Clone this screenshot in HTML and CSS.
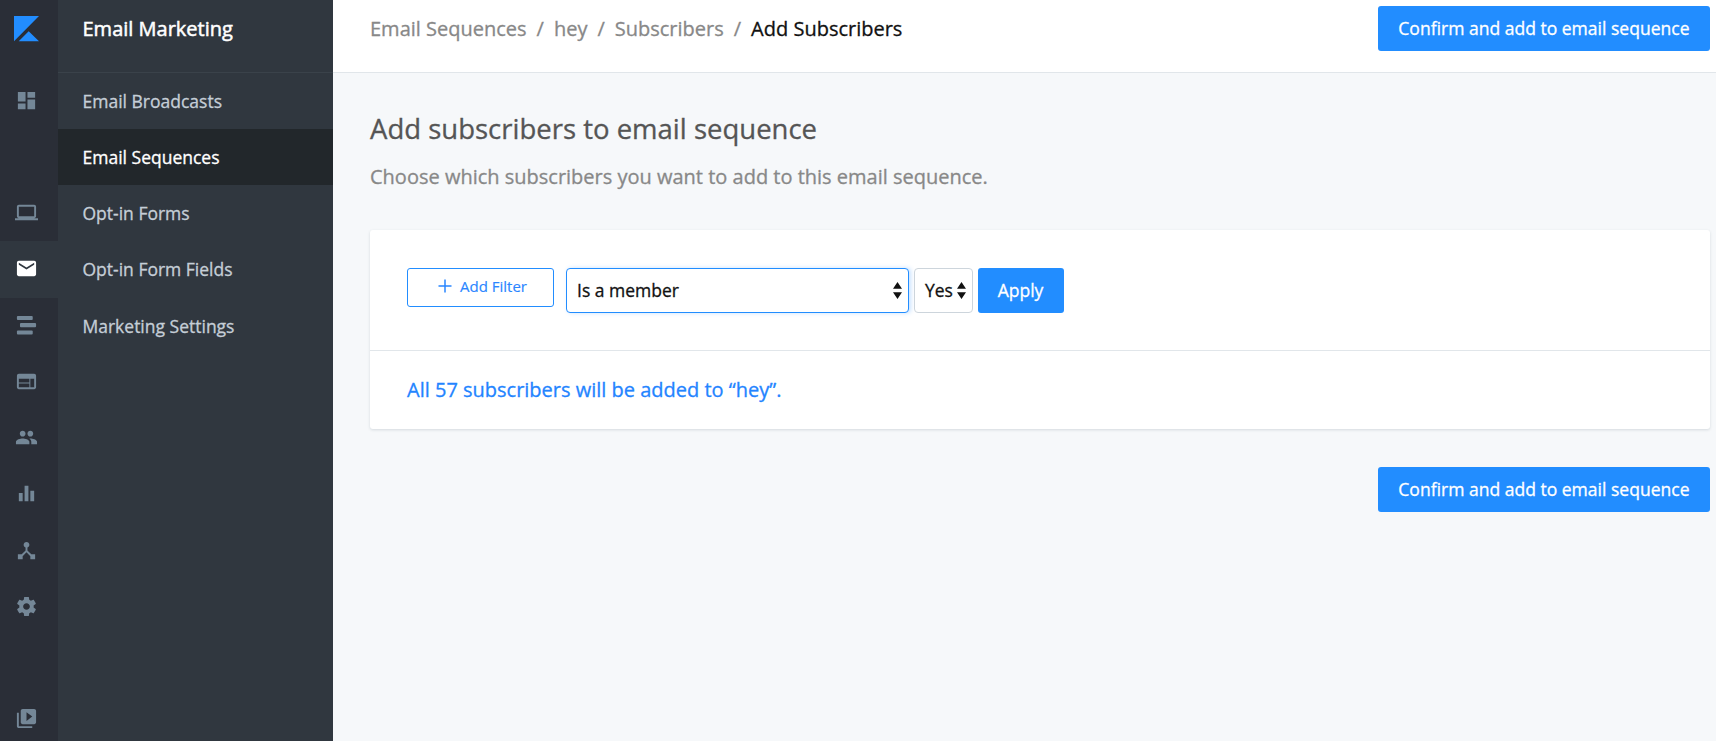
FILE: index.html
```
<!DOCTYPE html>
<html lang="en">
<head>
<meta charset="utf-8">
<title>Add Subscribers</title>
<link rel="stylesheet" href="styles.css">
</head>
<body>
<div class="app">
  <nav class="rail">
    <a class="logo"><svg width="26" height="26" viewBox="0 0 26 26"><path d="M0 0H25L0 25.300zM14.700 15.200L25 25.200H4.700z"/></svg></a>
    <a class="rail-item"><svg viewBox="0 0 24 24"><path d="M3 13h8V3H3v10zm0 8h8v-6H3v6zm10 0h8V11h-8v10zm0-18v6h8V3h-8z"/></svg></a>
    <a class="rail-item spaced"><svg viewBox="0 0 24 24"><path d="M20 18c1.100 0 1.990-.9 1.990-2L22 6c0-1.100-.9-2-2-2H4c-1.100 0-2 .9-2 2v10c0 1.100.9 2 2 2H0v2h24v-2h-4zM4 6h16v10H4V6z"/></svg></a>
    <a class="rail-item active"><svg viewBox="0 0 24 24"><path d="M20 4H4c-1.100 0-1.990.9-1.990 2L2 18c0 1.100.9 2 2 2h16c1.100 0 2-.9 2-2V6c0-1.100-.9-2-2-2zm0 4l-8 5-8-5V6l8 5 8-5v2z"/></svg></a>
    <a class="rail-item"><svg viewBox="0 0 24 24"><rect x="2" y="2" width="16.500" height="4.200" rx="1"/><rect x="5.200" y="9.500" width="16.800" height="4.200" rx="1"/><rect x="2" y="17.200" width="16.500" height="4.200" rx="1"/></svg></a>
    <a class="rail-item"><svg viewBox="0 0 24 24"><path d="M20 4H4c-1.100 0-1.990.9-1.990 2L2 18c0 1.100.9 2 2 2h16c1.100 0 2-.9 2-2V6c0-1.100-.9-2-2-2zm-5 14H4v-4h11v4zm0-5H4V9h11v4zm5 5h-4V9h4v9z"/></svg></a>
    <a class="rail-item"><svg viewBox="0 0 24 24"><path d="M16 11c1.660 0 2.990-1.340 2.990-3S17.660 5 16 5s-3 1.340-3 3 1.340 3 3 3zm-8 0c1.660 0 2.990-1.340 2.990-3S9.660 5 8 5 5 6.340 5 8s1.340 3 3 3zm0 2c-2.330 0-7 1.170-7 3.500V19h14v-2.500C15 14.170 10.330 13 8 13zm8 0c-.29 0-.62.020-.97.050C16.190 13.890 17 15.020 17 16.500V19h6v-2.500c0-2.330-4.670-3.500-7-3.500z"/></svg></a>
    <a class="rail-item"><svg viewBox="0 0 24 24"><path d="M4 11.500h4V20H4zM10 4h4v16h-4zM16 9h4v11h-4z"/></svg></a>
    <a class="rail-item low"><svg viewBox="0 0 24 24"><path d="M17 16l-4-4V8.820C14.160 8.400 15 7.300 15 6c0-1.660-1.340-3-3-3S9 4.340 9 6c0 1.300.84 2.400 2 2.820V12l-4 4H3v5h5v-3.050l4-4.200 4 4.200V21h5v-5h-4z"/></svg></a>
    <a class="rail-item"><svg viewBox="0 0 24 24"><path d="M19.430 12.980c.04-.32.070-.64.070-.98s-.03-.66-.07-.98l2.110-1.650c.19-.15.240-.42.120-.64l-2-3.460c-.12-.22-.39-.3-.61-.22l-2.490 1c-.52-.4-1.080-.73-1.690-.98l-.38-2.650C14.460 2.180 14.250 2 14 2h-4c-.25 0-.46.180-.49.420l-.38 2.650c-.61.250-1.170.590-1.690.980l-2.490-1c-.23-.09-.49 0-.61.220l-2 3.460c-.13.220-.07.490.120.640l2.110 1.650c-.04.320-.07.650-.07.980s.03.660.070.980l-2.110 1.650c-.19.150-.24.420-.12.640l2 3.460c.12.220.390.300.610.220l2.490-1c.52.400 1.080.730 1.690.980l.38 2.650c.03.240.240.420.490.420h4c.25 0 .46-.18.490-.42l.38-2.650c.61-.25 1.170-.59 1.690-.98l2.490 1c.23.090.490 0 .61-.22l2-3.460c.12-.22.070-.49-.12-.64l-2.110-1.650zM12 15.500c-1.930 0-3.500-1.570-3.500-3.500s1.570-3.500 3.500-3.500 3.500 1.570 3.500 3.500-1.570 3.500-3.500 3.500z"/></svg></a>
    <a class="rail-item spaced"><svg viewBox="0 0 24 24"><path d="M4 6H2v14c0 1.100.9 2 2 2h14v-2H4V6zm16-4H8c-1.100 0-2 .9-2 2v12c0 1.100.9 2 2 2h12c1.100 0 2-.9 2-2V4c0-1.100-.9-2-2-2zm-8 12.500v-9l6 4.500-6 4.500z"/></svg></a>
  </nav>
  <aside class="sidebar">
    <h2 class="sidebar-title"><span>Email Marketing</span></h2>
    <a class="side-link">Email Broadcasts</a>
    <a class="side-link current">Email Sequences</a>
    <a class="side-link">Opt-in Forms</a>
    <a class="side-link">Opt-in Form Fields</a>
    <a class="side-link last">Marketing Settings</a>
  </aside>
  <main class="main">
    <header class="topbar">
      <div class="crumbs"><a>Email Sequences</a><i>/</i><a>hey</a><i>/</i><a>Subscribers</a><i>/</i><b>Add Subscribers</b></div>
      <button class="btn">Confirm and add to email sequence</button>
    </header>
    <section class="content">
      <h1 class="title">Add subscribers to email sequence</h1>
      <p class="lead">Choose which subscribers you want to add to this email sequence.</p>
      <div class="card">
        <div class="filters">
          <button class="add-filter"><svg width="14" height="14" viewBox="0 0 14 14"><path d="M7 .5v13M.5 7h13"/></svg><span>Add Filter</span></button>
          <div class="select focused"><span>Is a member</span><svg width="9" height="17" viewBox="0 0 9 17"><path d="M4.500 0L9 6.800H0zM4.500 17L0 10.200h9z"/></svg></div>
          <div class="select small"><span>Yes</span><svg width="9" height="17" viewBox="0 0 9 17"><path d="M4.500 0L9 6.800H0zM4.500 17L0 10.200h9z"/></svg></div>
          <button class="btn apply">Apply</button>
        </div>
        <div class="result">All 57 subscribers will be added to “hey”.</div>
      </div>
      <div class="actions"><button class="btn">Confirm and add to email sequence</button></div>
    </section>
  </main>
</div>
</body>
</html>
```

FILE: styles.css
```
* { box-sizing: border-box; }
body { margin: 0; font-family: "Open Sans", "Noto Sans", sans-serif; font-size: 17.500px; color: #111; -webkit-text-stroke: .3px currentColor; }
h1, h2, p { margin: 0; font-weight: 400; }
button { font-family: inherit; margin: 0; -webkit-text-stroke: inherit; }
svg { display: block; flex: none; }

.app { display: flex; height: 741px; overflow: hidden; background: #f6f8fa; }

.rail { width: 57.500px; flex: none; background: #2a2e37; }
.logo { display: block; height: 73px; padding: 16px 0 0 14px; }
.logo svg { fill: #228dff; }
.rail-item { display: flex; align-items: center; height: 56.200px; padding: 0 0 1px 14.700px; }
.rail-item svg { width: 23px; height: 23px; fill: #748797; }
.rail-item.low { padding-bottom: 0; }
.rail-item.spaced { margin-top: 56px; }
.rail-item.active { background: #30373f; }
.rail-item.active svg { fill: #fff; }

.sidebar { width: 275.500px; flex: none; background: #30373f; }
.sidebar-title { height: 73px; padding: 13px 0 0 25px; border-bottom: 1px solid #3a424a; color: #fff; font-size: 20px; line-height: 31px; -webkit-text-stroke: .5px currentColor; }
.side-link { display: flex; align-items: center; height: 56px; padding: 0 0 1px 25px; color: #c5ced7; font-size: 17.500px; }
.side-link.current { background: #22272b; color: #fff; }
.side-link.last { height: 57px; padding-bottom: 0; }

.main { flex: 1; min-width: 0; }
.topbar { display: flex; justify-content: space-between; align-items: flex-start; height: 73px; padding: 6px 6.500px 0 37px; background: #fff; border-bottom: 1px solid #e1e6ea; }
.crumbs { display: flex; gap: 10px; margin-top: 7px; font-size: 20px; line-height: 31px; color: #888; }
.crumbs i { font-style: normal; }
.crumbs b { font-weight: 400; color: #111; }

.btn { height: 45px; width: 331.200px; padding: 0 0 1px; border: 0; border-radius: 3px; background: #228dff; color: #fff; font-size: 17.550px; white-space: nowrap; }

.content { padding: 36px 6.500px 0 37px; }
.title { font-size: 27.500px; line-height: 40px; color: #555; }
.lead { margin-top: 12px; font-size: 20px; line-height: 31px; color: #888; }
.card { height: 199px; margin-top: 38px; background: #fff; border-radius: 3px; box-shadow: 0 1px 3px rgba(40, 60, 80, .16); }
.filters { display: flex; align-items: flex-start; height: 121px; padding: 38px 37px 0; border-bottom: 1px solid #e1e6ea; }
.add-filter { display: flex; justify-content: center; align-items: center; gap: 8px; width: 147px; height: 39px; margin-right: 11.500px; padding: 0 0 3px 4px; border: 1px solid #228dff; border-radius: 3px; background: #fff; color: #2a86ff; font-size: 15px; -webkit-text-stroke-width: .15px; }
.add-filter svg { stroke: #2a86ff; stroke-width: 1.500; fill: none; }
.select { display: flex; justify-content: space-between; align-items: center; height: 45px; padding: 0 6px 1px 10.500px; border: 1px solid #cdd5dc; border-radius: 4px; background: #fff; }
.select svg { fill: #111; }
.select.focused { width: 343.500px; margin-right: 4.500px; border-color: #228dff; box-shadow: 2px 0 4px rgba(34, 141, 255, .25); }
.select.small { width: 59px; margin-right: 5px; padding-right: 5.500px; }
.btn.apply { width: 86px; }
.result { padding: 23px 37px 0; font-size: 20px; line-height: 31px; color: #2384ff; }
.actions { display: flex; justify-content: flex-end; margin-top: 38px; }
```
